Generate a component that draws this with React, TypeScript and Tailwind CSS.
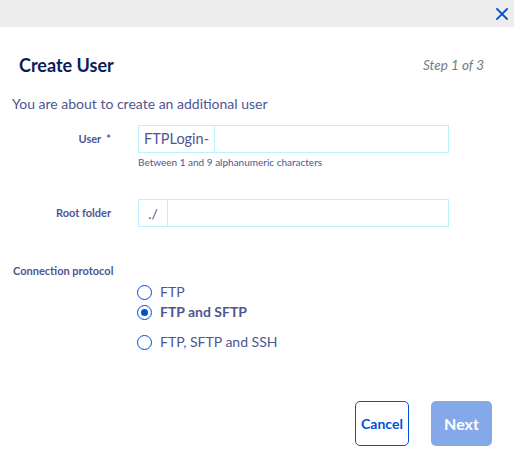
import { useState } from "react";

const font = { fontFamily: "Lato, 'Open Sans', sans-serif" };

const protocols = ["FTP", "FTP and SFTP", "FTP, SFTP and SSH"];

const Radio = ({ label, checked, onSelect, className }: { label: string; checked: boolean; onSelect: () => void; className?: string }) => (
  <label className={`flex items-center gap-[8px] cursor-pointer ${className ?? ""}`} onClick={onSelect}>
    <span className="flex h-[15px] w-[15px] items-center justify-center rounded-full border-[1.5px] border-[#0050d7] bg-white">
      {checked && <span className="h-[7px] w-[7px] rounded-full bg-[#0050d7]" />}
    </span>
    <span className={`text-[14px] leading-[18px] text-[#4d5693] ${checked ? "font-bold" : ""}`}>{label}</span>
  </label>
);

export default function App() {
  const [protocol, setProtocol] = useState(1);

  return (
    <div className="h-[453px] w-[514px] bg-white" style={font}>
      {/* Top bar */}
      <div className="flex h-[27px] items-center justify-end bg-[#ecedec] pr-[6px]">
        <svg width="12" height="12" viewBox="0 0 12 12" className="mt-[1px]">
          <path d="M1 1L11 11M11 1L1 11" stroke="#0050d7" strokeWidth="1.8" strokeLinecap="square" />
        </svg>
      </div>

      {/* Title */}
      <div className="mt-[26px] flex items-center justify-between pl-[19px] pr-[30px]">
        <h1 className="text-[18px] font-bold leading-[24px] text-[#0b1c5c]">Create User</h1>
        <span className="text-[13.5px] italic text-[#757b85]">Step 1 of 3</span>
      </div>

      <p className="mt-[17px] pl-[12px] text-[14px] leading-[20px] text-[#4d5693]">
        You are about to create an additional user
      </p>

      {/* User */}
      <div className="mt-[11px] flex items-center">
        <label className="w-[111px] text-right text-[11px] font-bold text-[#4d5693]">User&nbsp;&nbsp;*</label>
        <div className="ml-[27px] flex h-[28px] w-[311px] border border-[#bef1ff]">
          <span className="flex items-center border-r border-[#bef1ff] px-[5px] text-[14.5px] text-[#4d5693]">FTPLogin-</span>
          <input className="flex-1 px-2 text-[14px] text-[#4d5693] outline-none" />
        </div>
      </div>
      <p className="ml-[138px] mt-[2px] text-[10px] leading-[14px] text-[#4d5693]">Between 1 and 9 alphanumeric characters</p>

      {/* Root folder */}
      <div className="mt-[30px] flex items-center">
        <label className="w-[111px] text-right text-[11px] font-bold text-[#4d5693]">Root folder</label>
        <div className="ml-[27px] flex h-[28px] w-[311px] border border-[#bef1ff]">
          <span className="flex w-[29px] items-center justify-center border-r border-[#bef1ff] text-[14px] text-[#4d5693]">./</span>
          <input className="flex-1 px-2 text-[14px] text-[#4d5693] outline-none" />
        </div>
      </div>

      {/* Protocol */}
      <p className="mt-[37px] pl-[13px] text-[11px] font-bold leading-[14px] text-[#4d5693]">Connection protocol</p>
      <div className="ml-[137px] mt-[5px] flex flex-col">
        <Radio label={protocols[0]} checked={protocol === 0} onSelect={() => setProtocol(0)} />
        <Radio label={protocols[1]} checked={protocol === 1} onSelect={() => setProtocol(1)} className="mt-[2px]" />
        <Radio label={protocols[2]} checked={protocol === 2} onSelect={() => setProtocol(2)} className="mt-[12px]" />
      </div>

      {/* Actions */}
      <div className="mt-[50px] flex justify-end gap-[22px] pr-[22px]">
        <button className="h-[45px] w-[54px] rounded-[5px] border-[1.5px] border-[#0050d7] bg-white text-[14px] font-bold text-[#0050d7]">
          Cancel
        </button>
        <button disabled className="h-[45px] w-[61px] rounded-[5px] bg-[#85a8e9] text-[16px] font-bold text-white">
          Next
        </button>
      </div>
    </div>
  );
}
